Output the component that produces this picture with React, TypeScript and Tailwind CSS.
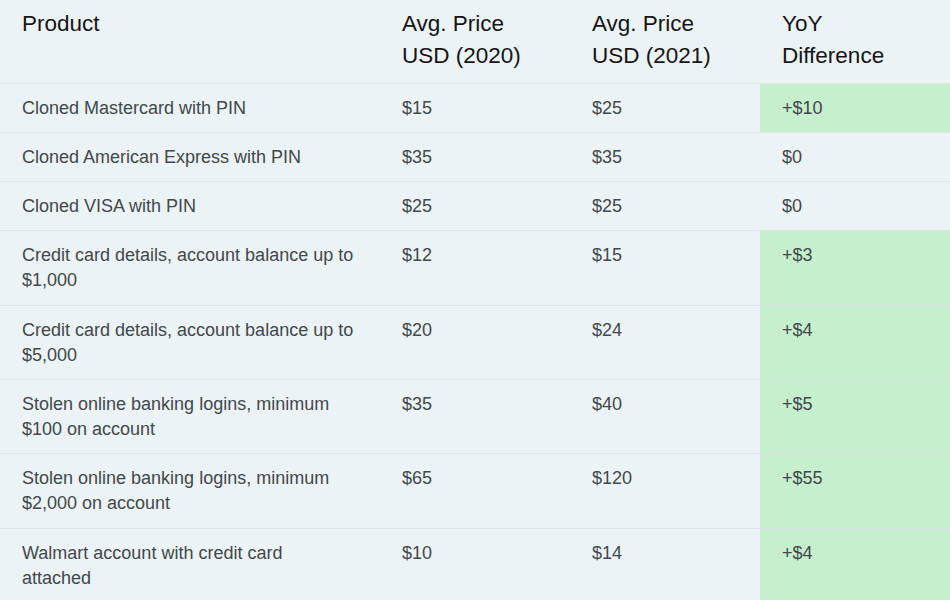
const rows: { product: string[]; p2020: string; p2021: string; diff: string; up: boolean }[] = [
  { product: ["Cloned Mastercard with PIN"], p2020: "$15", p2021: "$25", diff: "+$10", up: true },
  { product: ["Cloned American Express with PIN"], p2020: "$35", p2021: "$35", diff: "$0", up: false },
  { product: ["Cloned VISA with PIN"], p2020: "$25", p2021: "$25", diff: "$0", up: false },
  { product: ["Credit card details, account balance up to", "$1,000"], p2020: "$12", p2021: "$15", diff: "+$3", up: true },
  { product: ["Credit card details, account balance up to", "$5,000"], p2020: "$20", p2021: "$24", diff: "+$4", up: true },
  { product: ["Stolen online banking logins, minimum", "$100 on account"], p2020: "$35", p2021: "$40", diff: "+$5", up: true },
  { product: ["Stolen online banking logins, minimum", "$2,000 on account"], p2020: "$65", p2021: "$120", diff: "+$55", up: true },
  { product: ["Walmart account with credit card", "attached"], p2020: "$10", p2021: "$14", diff: "+$4", up: true },
]

const headers = [["Product"], ["Avg. Price", "USD (2020)"], ["Avg. Price", "USD (2021)"], ["YoY", "Difference"]]

export default function App() {
  return (
    <div className="w-[950px] h-[600px] overflow-hidden bg-[#ecf3f6] font-['Liberation_Sans',Arial,sans-serif]">
      <table className="w-[950px] table-fixed border-collapse">
        <colgroup>
          <col className="w-[380px]" />
          <col className="w-[190px]" />
          <col className="w-[190px]" />
          <col className="w-[190px]" />
        </colgroup>
        <thead>
          <tr className="border-b border-[#dce3e6] text-left align-top text-[22.5px] leading-[32px] text-[#151515]">
            {headers.map((h) => (
              <th key={h.join()} className="pl-[22px] pr-4 pt-2 pb-[10.5px] font-normal">
                {h.map((line) => (
                  <div key={line} className="whitespace-nowrap">{line}</div>
                ))}
              </th>
            ))}
          </tr>
        </thead>
        <tbody className="text-[18px] leading-[25px] text-[#42484b]">
          {rows.map((r) => (
            <tr key={r.product.join()} className="border-b border-[#dce3e6] align-top">
              <td className="pl-[22px] pr-4 pt-3 pb-[11.3px]">
                {r.product.map((line) => (
                  <div key={line} className="whitespace-nowrap">{line}</div>
                ))}
              </td>
              <td className="pl-[22px] pr-4 pt-3 pb-[11.3px]">{r.p2020}</td>
              <td className="pl-[22px] pr-4 pt-3 pb-[11.3px]">{r.p2021}</td>
              <td className={`pl-[22px] pr-4 pt-3 pb-[11.3px] ${r.up ? "bg-[#c6efce]" : ""}`}>{r.diff}</td>
            </tr>
          ))}
        </tbody>
      </table>
    </div>
  )
}
